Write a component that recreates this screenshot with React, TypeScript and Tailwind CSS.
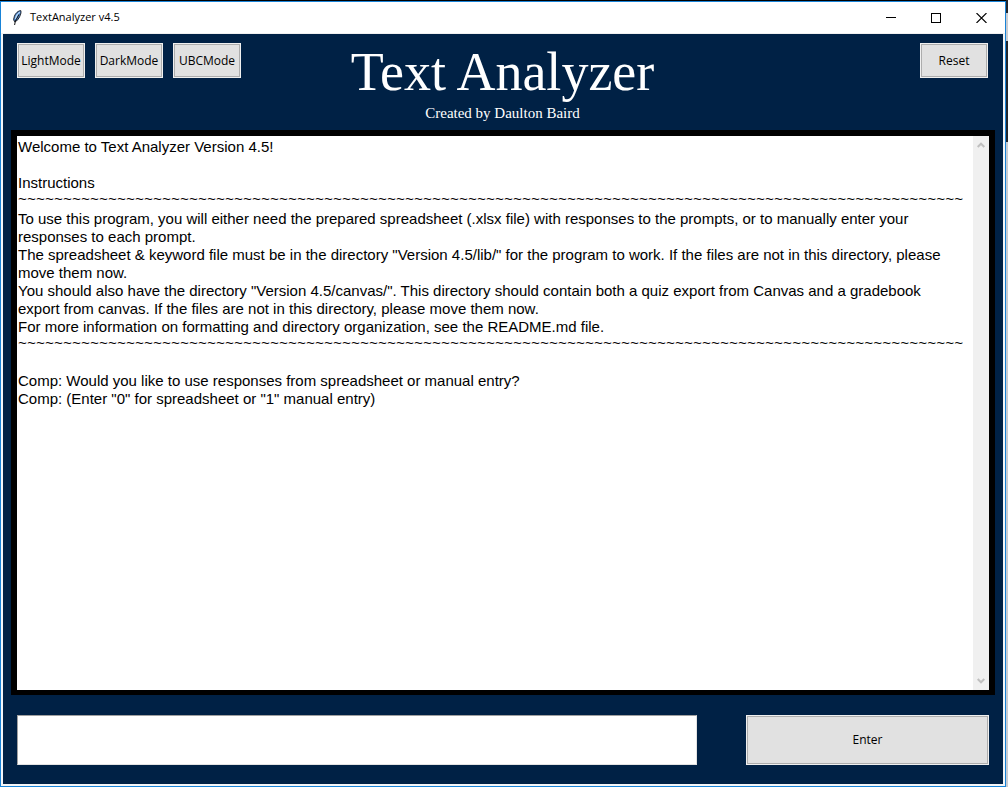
import type { ButtonHTMLAttributes } from "react";

const RULE = "~".repeat(105);

function TkButton({ className = "", ...props }: ButtonHTMLAttributes<HTMLButtonElement>) {
  return (
    <button
      type="button"
      className={`border border-[#f0f0f0] bg-[#e1e1e1] text-xs text-black outline outline-1 -outline-offset-2 outline-[#adadad] ${className}`}
      {...props}
    />
  );
}

function Feather() {
  return (
    <svg width="16" height="16" viewBox="0 0 16 16" aria-hidden="true">
      <path d="M11.8 0.6 C9 0.8 6.4 3.4 5.4 6.2 L4.6 9.6 L5.6 11.8 L8.2 10.4 C10.6 7.4 12.6 3.4 11.8 0.6Z" fill="#4a86cf" stroke="#20242c" strokeWidth="1" />
      <path d="M10.8 2 C8.6 3.6 7 6.4 6.4 9" fill="none" stroke="#b8d8f8" strokeWidth="1.3" />
      <path d="M10 4.4 L6.4 11 L5.6 15" fill="none" stroke="#111" strokeWidth="1" />
    </svg>
  );
}

function TitleBar() {
  return (
    <header className="flex h-8 items-center border-b border-[#f0f0f0] bg-white pl-2">
      <Feather />
      <span className="flex-1 pl-[5px] text-[11px] text-black">TextAnalyzer v4.5</span>
      <button type="button" aria-label="Minimize" className="flex h-full w-[45px] items-center justify-center">
        <svg width="10" height="10" viewBox="0 0 10 10" shapeRendering="crispEdges"><path d="M0 4.5H10" stroke="#000" /></svg>
      </button>
      <button type="button" aria-label="Maximize" className="flex h-full w-[45px] items-center justify-center">
        <svg width="10" height="10" viewBox="0 0 10 10" shapeRendering="crispEdges"><path d="M.5 .5H9.5V9.5H.5Z" fill="none" stroke="#000" /></svg>
      </button>
      <button type="button" aria-label="Close" className="flex h-full w-[47px] items-center justify-center">
        <svg width="11" height="10" viewBox="0 0 11 10"><path d="M.5 0L10.5 10M10.5 0L.5 10" stroke="#000" strokeWidth="1.1" /></svg>
      </button>
    </header>
  );
}

function Rule() {
  return <p className="overflow-hidden whitespace-nowrap font-['Liberation_Mono',monospace]">{RULE}</p>;
}

export default function App() {
  return (
    <div className="flex min-h-screen flex-col bg-[linear-gradient(#22262c_13px,#c9ccd1_13px_41px,#22262c_41px_142px,#c9ccd1_142px)] pr-0.5">
      <div className="h-px bg-black" />
      <div className="flex flex-1 flex-col border border-[#1883d7] bg-[#f4f6f8] font-['Open_Sans',sans-serif]">
        <TitleBar />
        <main className="mx-0.5 mb-0.5 flex flex-1 flex-col bg-[#002145] px-2 pb-[19px]">
          <div className="grid grid-cols-[1fr_auto_1fr] pt-2 pr-[7px] pl-1.5">
            <div className="flex items-start gap-2.5 pt-px">
              <TkButton className="h-[35px] w-[68px]">LightMode</TkButton>
              <TkButton className="h-[35px] w-[68px]">DarkMode</TkButton>
              <TkButton className="h-[35px] w-[68px]">UBCMode</TkButton>
            </div>
            <div className="text-center font-['Liberation_Serif',serif] text-white">
              <h1 className="text-[54px] leading-[60px]">Text Analyzer</h1>
              <p className="text-[15px] leading-[22px]">Created by Daulton Baird</p>
            </div>
            <div className="flex items-start justify-end pt-px">
              <TkButton className="h-[35px] w-[68px]">Reset</TkButton>
            </div>
          </div>
          <section aria-label="Conversation" className="mt-1.5 flex flex-1 border-6 border-b-5 border-black bg-white">
            <div className="flex-1 pt-0.5 pr-2 pl-px font-['Liberation_Sans',sans-serif] text-[15px] leading-[18px] text-black">
              <p>Welcome to Text Analyzer Version 4.5!</p>
              <br />
              <p>Instructions</p>
              <Rule />
              <p>To use this program, you will either need the prepared spreadsheet (.xlsx file) with responses to the prompts, or to manually enter your responses to each prompt.</p>
              <p>The spreadsheet &amp; keyword file must be in the directory "Version 4.5/lib/" for the program to work. If the files are not in this directory, please move them now.</p>
              <p>You should also have the directory "Version 4.5/canvas/". This directory should contain both a quiz export from Canvas and a gradebook export from canvas. If the files are not in this directory, please move them now.</p>
              <p>For more information on formatting and directory organization, see the README.md file.</p>
              <Rule />
              <br />
              <p>Comp: Would you like to use responses from spreadsheet or manual entry?</p>
              <p>Comp: (Enter "0" for spreadsheet or "1" manual entry)</p>
            </div>
            <div className="flex w-4 flex-col items-center justify-between bg-[#f0f0f0] py-1.5">
              <svg width="8" height="6" viewBox="0 0 8 6"><path d="M0.7 5L4 1.7L7.3 5" fill="none" stroke="#bfbfbf" strokeWidth="2" /></svg>
              <svg width="8" height="6" viewBox="0 0 8 6"><path d="M0.7 1L4 4.3L7.3 1" fill="none" stroke="#bfbfbf" strokeWidth="2" /></svg>
            </div>
          </section>
          <form className="mt-5 flex h-[50px] justify-between gap-[49px] px-1.5" onSubmit={(e) => e.preventDefault()}>
            <input aria-label="Response" className="min-w-0 flex-1 border border-t-[#a0a0a0] border-r-[#e3e3e3] border-b-[#e3e3e3] border-l-[#a0a0a0] bg-white px-1 text-base text-black" />
            <TkButton className="w-1/4">Enter</TkButton>
          </form>
        </main>
      </div>
    </div>
  );
}
